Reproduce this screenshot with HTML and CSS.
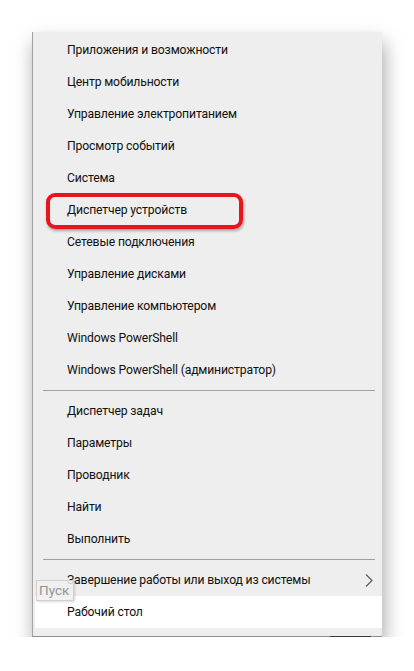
FILE: index.html
```html
<!DOCTYPE html>
<html>

<head>
    <title>Win+X menu</title>
    <link rel="stylesheet" href="styles.css">
</head>

<body>
    <div class="menu">
        <div class="group">
            <div class="item">Приложения и возможности</div>
            <div class="item">Центр мобильности</div>
            <div class="item">Управление электропитанием</div>
            <div class="item">Просмотр событий</div>
            <div class="item">Система</div>
            <div class="item marked">Диспетчер устройств</div>
            <div class="item">Сетевые подключения</div>
            <div class="item">Управление дисками</div>
            <div class="item">Управление компьютером</div>
            <div class="item">Windows PowerShell</div>
            <div class="item">Windows PowerShell (администратор)</div>
        </div>
        <div class="separator"></div>
        <div class="group">
            <div class="item">Диспетчер задач</div>
            <div class="item">Параметры</div>
            <div class="item">Проводник</div>
            <div class="item">Найти</div>
            <div class="item">Выполнить</div>
        </div>
        <div class="separator"></div>
        <div class="group">
            <div class="item submenu">
                <span>Завершение работы или выход из системы</span>
                <svg class="chevron" width="8" height="13" viewBox="0 0 8 13">
                    <path d="M1 0.5 L7 6.5 L1 12.5" fill="none" stroke="#555" stroke-width="1.1" />
                </svg>
            </div>
            <div class="item hover">Рабочий стол</div>
        </div>
        <div class="taskbar-mark"></div>
        <div class="tooltip">Пуск</div>
    </div>
</body>

</html>
```

FILE: styles.css
```css
body {
    margin: 0;
    background-color: #ffffff;
    font-family: Roboto, "Noto Sans", sans-serif;
}

.menu {
    position: relative;
    width: 349px;
    margin: 32px 0 0 32px;
    padding: 2px 0 8px 0;
    background-color: #eeeeee;
    border-left: 1px solid #a3a3a3;
    border-bottom: 1px solid #8f8f8f;
    box-shadow: 2px 10px 18px rgba(0, 0, 0, 0.35);
}

.item {
    height: 32px;
    margin-left: 2px;
    padding-left: 32px;
    display: flex;
    align-items: center;
    font-size: 12.2px;
    letter-spacing: -0.15px;
    color: #111111;
}

.item.hover {
    background-color: #ffffff;
}

.item.submenu {
    justify-content: space-between;
    padding-right: 9px;
}

.chevron {
    display: block;
}

.marked {
    position: relative;
}

.marked::after {
    content: "";
    position: absolute;
    left: 11px;
    top: -1px;
    width: 189px;
    height: 28px;
    border: 4px solid #e8151b;
    border-radius: 9px;
    box-shadow: 1px 2px 3px rgba(0, 0, 0, 0.3);
}

.separator {
    height: 1px;
    margin: 4px 7px 4px 10px;
    background-color: #a0a0a0;
}

.taskbar-mark {
    position: absolute;
    right: 11px;
    bottom: -1px;
    width: 41px;
    height: 1px;
    background-color: #3c3c3c;
}

.tooltip {
    position: absolute;
    left: 3px;
    top: 548px;
    padding: 1px 4px 2px 2px;
    font-size: 13.5px;
    color: #939393;
    background-color: rgba(240, 240, 240, 0.85);
    border: 1px solid #cfcfcf;
    box-shadow: 1px 1px 2px rgba(0, 0, 0, 0.15);
}
```
